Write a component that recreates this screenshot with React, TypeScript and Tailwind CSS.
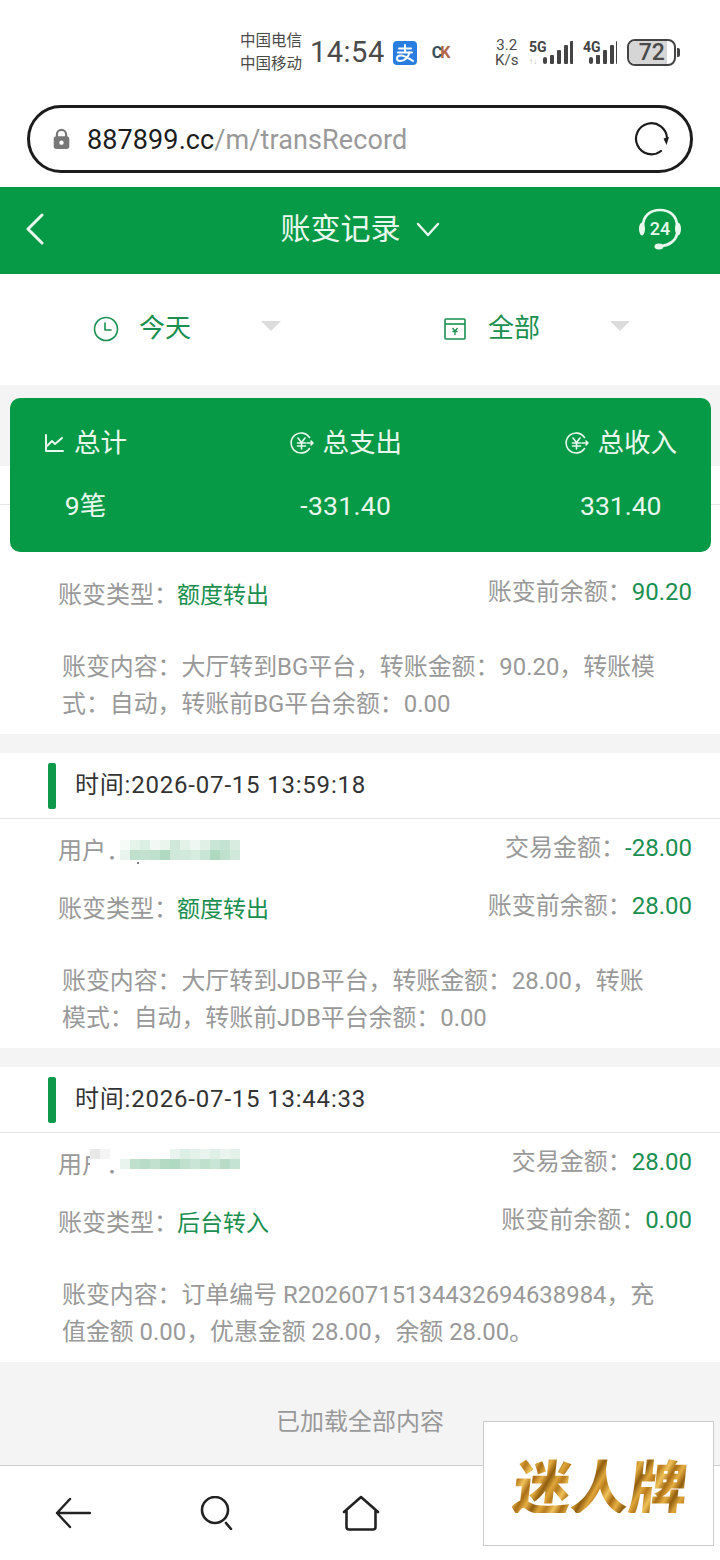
import React from "react";

const FONT = "font-['Roboto','Noto_Sans_CJK_SC',sans-serif]";
const C = "\uFF1A";
const K = "\uFF0C";

function Mosaic({ rows, className }: { rows: string[][]; className: string }) {
  return (
    <div className={"absolute flex flex-col " + className}>
      {rows.map((r, i) => (
        <div key={i} className="flex">
          {r.map((c, j) => (
            <div key={j} className="h-[10px] w-[10px]" style={{ backgroundColor: c }} />
          ))}
        </div>
      ))}
    </div>
  );
}

const M2 = [
  ["#f6fbf8", "#e6f3eb", "#dcefe4", "#f2f9f5", "#eaf5ee", "#cfe8da", "#e2f2e9", "#eef7f2", "#e0f0e6", "#c8e5d5", "#c4e3d2", "#d8ece0"],
  ["#e8f4ed", "#c0e0ce", "#c2e2cf", "#bfe0cd", "#b0d9c2", "#cfe8da", "#d0e9da", "#d6ecdf", "#c8e5d5", "#aed8c0", "#bfe0cd", "#cfe8da"],
];
const M3 = [
  ["#e8e8e8", "#f4f4f4", "#ffffff", "#ffffff", "#ffffff", "#ffffff", "#ffffff", "#ffffff", "#e8f4ed", "#dcefe4", "#e4f2ea", "#e8f4ed", "#e0f0e6", "#e8f4ed", "#e4f2ea"],
  ["#ffffff", "#ffffff", "#ffffff", "#e8f4ed", "#c0e0ce", "#b8dcc8", "#c2e2cf", "#b4dac4", "#b0d9c2", "#bfe0cd", "#c8e5d5", "#bfe0cd", "#c8e5d5", "#b8dcc8", "#c4e3d2"],
];

function Record({
  time,
  amount,
  type,
  before,
  lines,
  first,
  mosaic,
}: {
  time?: string;
  amount?: string;
  type: string;
  before: string;
  lines: string[];
  first?: boolean;
  mosaic?: 2 | 3;
}) {
  return (
    <section className="bg-white">
      {first ? (
        <div className="h-[39px] border-b border-[#e6e6e6]" />
      ) : (
        <div className="flex h-[66px] items-center gap-[19px] border-b border-[#e6e6e6] pl-[48px]">
          <div className="h-[46px] w-[8px] rounded-[2px] bg-[#0f9a4b]" />
          <span className="pb-[2px] text-[24px] tracking-[0.8px] text-[#333]">时间:{time}</span>
        </div>
      )}
      <div className="relative h-[229px] pl-[58px] pr-[28px] pt-[3px] text-[24px]">
        {first ? (
          <div className="h-[58px]" />
        ) : (
          <div className="flex h-[58px] items-center justify-between">
            <span className="text-[#999]">用户{C}</span>
            <span className="mb-[7px] text-[#999]">
              交易金额{C}<span className="text-[#1a8f50]">{amount}</span>
            </span>
          </div>
        )}
        <div className="flex h-[58px] items-center justify-between">
          <span className="text-[#999]">
            账变类型{C}<span className="ml-[-1px] text-[23px] text-[#1a8f50]">{type}</span>
          </span>
          <span className="mb-[7px] text-[#999]">
            账变前余额{C}<span className="text-[#1a8f50]">{before}</span>
          </span>
        </div>
        <div className="mt-[25px] ml-[4px] text-[23.9px] leading-[37px] text-[#999]">
          {lines.map((l) => (
            <div key={l} className="whitespace-nowrap">{l}</div>
          ))}
        </div>
        {mosaic === 2 && (
          <>
            <div className="absolute left-[104px] top-[22px] h-[15px] w-[16px] bg-white" />
            <Mosaic rows={M2} className="left-[120px] top-[21px]" />
            <div className="absolute left-[137px] top-[43px] h-[2px] w-[2px] rounded-full bg-[#555]" />
          </>
        )}
        {mosaic === 3 && <Mosaic rows={M3} className="left-[90px] top-[16px]" />}
      </div>
    </section>
  );
}

function Signal({ label, sub, wide }: { label: string; sub?: boolean; wide?: boolean }) {
  const x0 = wide ? 14 : 6;
  return (
    <svg width={wide ? 44 : 34} height="26" viewBox={wide ? "0 0 44 26" : "0 0 34 26"}>
      <text x="0" y="12" fontSize="14" fontWeight="700" fontFamily="Roboto" fill="#444">{label}</text>
      {sub && <text x="0" y="24" fontSize="8" fontFamily="Roboto" fill="#bbb">↑↓</text>}
      <g fill="#444">
        <rect x={x0} y="17" width="4" height="7" rx="2" />
        <rect x={x0 + 7} y="15" width="4" height="9" rx="1" />
        <rect x={x0 + 14} y="10" width="4" height="14" rx="1" />
        <rect x={x0 + 21} y="5" width="4" height="19" rx="1" />
        <rect x={x0 + 27} y="1" width="4" height="23" rx="1" />
      </g>
    </svg>
  );
}

function YuanIcon() {
  return (
    <svg width="24" height="24" viewBox="0 0 24 24" fill="none" stroke="#e9f8ef" strokeWidth="1.6" strokeLinecap="round" strokeLinejoin="round">
      <path d="M19.5 6.5A10 10 0 1 0 19.5 17.5" />
      <path d="M8 7l3.5 4.5L15 7M7.5 12h8M7.5 15h8M11.5 11.5V18" />
      <path d="M17 12h6M21 10l2 2-2 2" />
    </svg>
  );
}

export default function App() {
  return (
    <div className={"relative h-[1560px] w-[720px] overflow-hidden bg-white " + FONT}>
      <header className="flex h-[105px] items-center pl-[240px] text-[#4a4a4a]">
        <div className="w-[64px] text-[15.5px] leading-[23px]">
          <div>中国电信</div>
          <div>中国移动</div>
        </div>
        <span className="ml-[6px] text-[29px] tracking-[0.5px]">14:54</span>
        <svg className="ml-[8px]" width="24" height="24" viewBox="0 0 24 24" fill="none" stroke="#fff" strokeWidth="2" strokeLinecap="round" strokeLinejoin="round">
          <rect width="24" height="24" rx="4" fill="#2a7ee0" stroke="none" />
          <path d="M6 7.500h12M5 11.500h14M12 4v7.500" />
          <path d="M16.500 11.500c-1 4.500-5 8.500-9 8.500-2 0-3.500-1-3.500-2.500 0-2 2-3 4-3 4 0 8 3 12 5.500" />
        </svg>
        <span className="ml-[15px] w-[20px] text-[16px] font-bold tracking-[-2px] text-[#35505a]">
          C<span className="text-[#b5654a]">K</span>
        </span>
        <div className="ml-[42px] w-[26px] text-center text-[15px] leading-[15px]">
          <div>3.2</div>
          <div>K/s</div>
        </div>
        <div className="ml-[9px]">
          <Signal label="5G" sub wide />
        </div>
        <div className="ml-[10px]">
          <Signal label="4G" />
        </div>
        <div className="ml-[10px] flex items-center">
          <div className="flex h-[27px] w-[49px] items-center overflow-hidden rounded-[8px] border-2 border-[#444]">
            <div className="flex h-full w-[38px] items-center justify-center bg-[#d6d6d6] pl-[8px] text-[23px] font-medium leading-none">
              72
            </div>
          </div>
          <div className="ml-[1px] h-[9px] w-[3px] rounded-r-[2px] bg-[#444]" />
        </div>
      </header>

      <div className="mx-[27px] flex h-[68px] items-center rounded-full border-[3px] border-[#1c1c1c] pl-[22px] pr-[20px]">
        <svg width="19" height="22" viewBox="0 0 20 24" fill="#777">
          <path d="M5 10V7a5 5 0 0 1 10 0v3" fill="none" stroke="#777" strokeWidth="2.4" />
          <rect x="1.5" y="9" width="17" height="14" rx="3" />
          <circle cx="10" cy="16" r="2.4" fill="#fff" />
        </svg>
        <span className="ml-[16px] pt-[3px] text-[27px] tracking-[0.1px]">
          <span className="text-[#1c1c1c]">887899.cc</span>
          <span className="text-[#9a9a9a]">/m/transRecord</span>
        </span>
        <svg className="ml-auto" width="36" height="36" viewBox="0 0 36 36" fill="none" stroke="#1c1c1c" strokeWidth="2.2" strokeLinecap="round">
          <path d="M27 30A15.500 15.500 0 1 1 33 17" />
          <path d="M29.500 17.500L35 16l-2.500 8z" fill="#1c1c1c" stroke="none" />
        </svg>
      </div>

      <nav className="mt-[14px] grid h-[87px] grid-cols-[1fr_auto_1fr] items-center bg-[#079a46] pb-[3px] text-[#e9f8ef]">
        <svg className="ml-[25px]" width="20" height="32" viewBox="0 0 20 32" fill="none" stroke="#e9f8ef" strokeWidth="3" strokeLinecap="round" strokeLinejoin="round">
          <path d="M17 2L3 16l14 14" />
        </svg>
        <div className="flex items-center gap-[15px]">
          <span className="text-[30px] leading-none">账变记录</span>
          <svg width="24" height="16" viewBox="0 0 24 16" fill="none" stroke="#e9f8ef" strokeWidth="2.4" strokeLinecap="round" strokeLinejoin="round">
            <path d="M2 3l10 11L22 3" />
          </svg>
        </div>
        <svg className="mr-[38px] justify-self-end" width="44" height="42" viewBox="0 0 44 42" fill="none" stroke="#e9f8ef" strokeWidth="2.6" strokeLinecap="round">
          <path d="M5 18C5 8 12 2 22 2s17 6 17 16" />
          <path d="M39 26c-1 6-7 11-15 12" />
          <ellipse cx="4" cy="21" rx="3" ry="6.500" fill="#e9f8ef" stroke="none" />
          <ellipse cx="40" cy="21" rx="3" ry="6.500" fill="#e9f8ef" stroke="none" />
          <ellipse cx="21" cy="38.500" rx="4.500" ry="3" fill="#e9f8ef" stroke="none" />
          <text x="22" y="26.500" textAnchor="middle" fontSize="18" fontWeight="500" fontFamily="Roboto" fill="#e9f8ef" stroke="none">24</text>
        </svg>
      </nav>

      <div className="grid h-[111px] grid-cols-2 items-center pb-[2px]">
        <div className="flex items-center pl-[93px]">
          <svg width="26" height="26" viewBox="0 0 26 26" fill="none" stroke="#1a8f50" strokeWidth="1.6" strokeLinecap="round" strokeLinejoin="round">
            <circle cx="13" cy="13" r="11.500" />
            <path d="M12 7v7h6" />
          </svg>
          <span className="ml-[20px] text-[26px] text-[#1a8f50]">今天</span>
          <div className="mb-[6px] ml-[70px] h-0 w-0 border-x-[10px] border-t-[10px] border-x-transparent border-t-[#dcdcdc]" />
        </div>
        <div className="flex items-center pl-[83px]">
          <svg width="24" height="24" viewBox="0 0 24 24" fill="none" stroke="#1a8f50" strokeWidth="1.6" strokeLinejoin="round">
            <rect x="2" y="2" width="20" height="20" rx="1" />
            <path d="M2 7h20" />
            <path d="M9.500 11l2.500 3 2.500-3M9.500 14.500h5M12 14v4" strokeWidth="1.300" />
          </svg>
          <span className="ml-[21px] text-[26px] text-[#1a8f50]">全部</span>
          <div className="mb-[6px] ml-[70px] h-0 w-0 border-x-[10px] border-t-[10px] border-x-transparent border-t-[#dcdcdc]" />
        </div>
      </div>

      <main className="relative bg-[#f4f4f4] pt-[81px]">
        <div className="absolute left-[10px] right-[9px] top-[13px] z-10 flex h-[154px] justify-between rounded-[10px] bg-[#079a46] pl-[34px] pr-[34px] pt-[26px] text-[26.5px] text-[#e9f8ef]">
          <div className="flex flex-col items-center gap-[25px]">
            <div className="flex h-[38px] items-center gap-[10px]">
              <svg width="20" height="20" viewBox="0 0 20 20" fill="none" stroke="#e9f8ef" strokeWidth="2" strokeLinejoin="round" strokeLinecap="round">
                <path d="M2 2v16h17" />
                <path d="M3 13l5-5 3 3 7-6" />
              </svg>
              <span>总计</span>
            </div>
            <span className="leading-[38px]">9笔</span>
          </div>
          <div className="flex flex-col items-center gap-[25px]">
            <div className="flex h-[38px] items-center gap-[9px]">
              <YuanIcon />
              <span>总支出</span>
            </div>
            <span className="leading-[38px] tracking-[0.3px]">-331.40</span>
          </div>
          <div className="flex flex-col items-center gap-[25px]">
            <div className="flex h-[38px] items-center gap-[9px]">
              <YuanIcon />
              <span>总收入</span>
            </div>
            <span className="leading-[38px]">331.40</span>
          </div>
        </div>

        <div className="flex flex-col gap-[19px]">
          <Record
            first
            type="额度转出"
            before="90.20"
            lines={[`账变内容${C}大厅转到BG平台${K}转账金额${C}90.20${K}转账模`, `式${C}自动${K}转账前BG平台余额${C}0.00`]}
          />
          <Record
            mosaic={2}
            time="2026-07-15 13:59:18"
            amount="-28.00"
            type="额度转出"
            before="28.00"
            lines={[`账变内容${C}大厅转到JDB平台${K}转账金额${C}28.00${K}转账`, `模式${C}自动${K}转账前JDB平台余额${C}0.00`]}
          />
          <Record
            mosaic={3}
            time="2026-07-15 13:44:33"
            amount="28.00"
            type="后台转入"
            before="0.00"
            lines={[`账变内容${C}订单编号 R20260715134432694638984${K}充`, `值金额 0.00${K}优惠金额 28.00${K}余额 28.00。`]}
          />
        </div>

        <div className="flex h-[103px] items-start justify-center pt-[42px] text-[24px] leading-[36px] text-[#999]">
          已加载全部内容
        </div>
      </main>

      <footer className="flex h-[95px] items-center border-t border-[#cfcfcf] bg-white pl-[55px]">
        <svg width="36" height="32" viewBox="0 0 36 32" fill="none" stroke="#222" strokeWidth="2.4" strokeLinecap="round" strokeLinejoin="round">
          <path d="M15 2L2 16l13 14M2 16h33" />
        </svg>
        <svg className="ml-[109px]" width="34" height="34" viewBox="0 0 34 34" fill="none" stroke="#222" strokeWidth="2.6" strokeLinecap="round">
          <circle cx="15" cy="14" r="13" />
          <path d="M26 27l5 6" />
        </svg>
        <svg className="ml-[108px]" width="38" height="36" viewBox="0 0 38 36" fill="none" stroke="#222" strokeWidth="2.6" strokeLinecap="round" strokeLinejoin="round">
          <path d="M2 17L19 2l17 15M4.500 15v17a2.500 2.500 0 0 0 2.500 2.500h24a2.500 2.500 0 0 0 2.500-2.500V15" />
        </svg>
      </footer>

      <div className="absolute left-[483px] top-[1421px] z-20 flex h-[125px] w-[231px] items-center justify-center border border-[#cccccc] bg-white pl-[5px]">
        <span className="-skew-x-6 bg-[repeating-linear-gradient(115deg,#8a5a10_0px,#e0a73a_7px,#b87a1c_13px,#f0c35a_20px,#a86c14_27px,#e6b044_34px,#96600f_41px)] bg-clip-text font-['Noto_Sans_CJK_SC',sans-serif] text-[58px] font-black leading-none text-transparent">
          迷人牌
        </span>
      </div>
    </div>
  );
}
